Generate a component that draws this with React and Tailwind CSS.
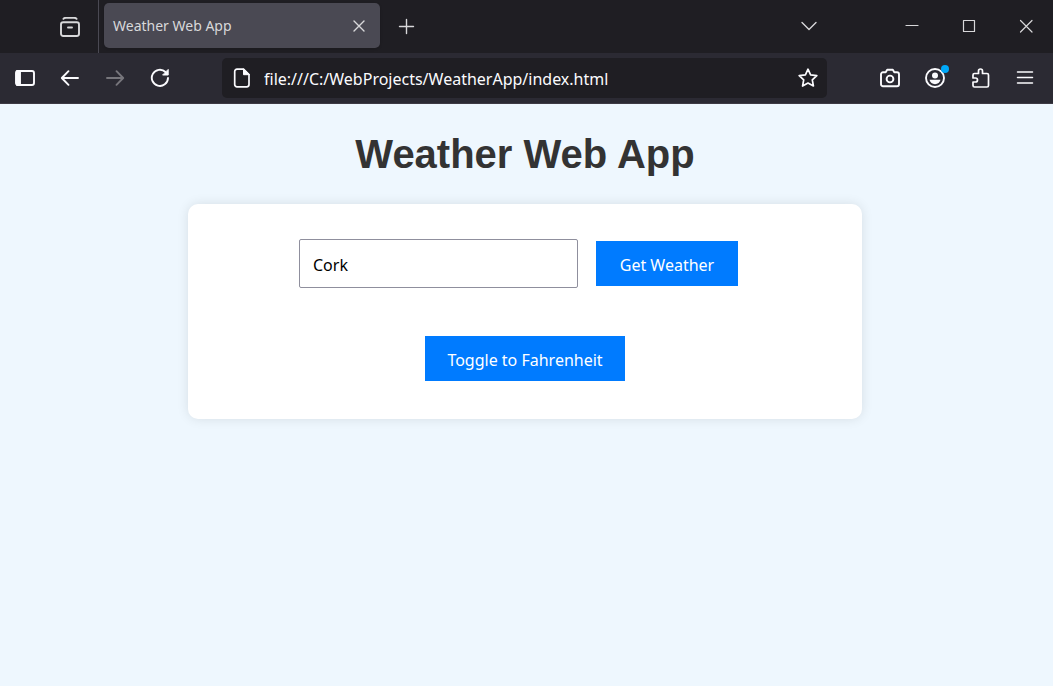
import React, { useState } from 'react';

// Shared frame for the 20x20 browser icons
const Icon = ({ children, className = '' }) => (
    <svg
        width="20"
        height="20"
        viewBox="0 0 20 20"
        fill="none"
        stroke="currentColor"
        strokeWidth="1.9"
        strokeLinecap="round"
        strokeLinejoin="round"
        aria-hidden="true"
        className={`shrink-0 ${className}`}
    >
        {children}
    </svg>
);

const ToolButton = ({ label, children, className = '' }) => (
    <button
        type="button"
        aria-label={label}
        className={`flex h-10 w-[45px] items-center justify-center ${className}`}
    >
        {children}
    </button>
);

const WindowButton = ({ label, children }) => (
    <button type="button" aria-label={label} className="flex h-full w-[54px] items-center justify-center">
        {children}
    </button>
);

const TabStrip = () => (
    <div className="flex h-[53px] items-center bg-[#1f1e23] text-[#d8d8da]">
        <button type="button" aria-label="Firefox View" className="flex h-full w-[99px] items-center justify-end border-r border-[#4a4953] pr-[18px]">
            <Icon>
                <rect x="1" y="5.2" width="18" height="13.8" rx="2.2" />
                <path d="M3.5 1.8C4 .9 4.8.8 6 .8h8c1.200 0 2 .1 2.500 1M8 10.500h4" />
            </Icon>
        </button>

        <div className="mb-0.5 ml-[5px] flex h-[45px] w-[276px] items-center justify-between rounded-[5px] bg-[#4a4953] pr-[11px] pl-[9px] shadow">
            <span className="pt-px text-[14px] leading-5">Weather Web App</span>
            <button type="button" aria-label="Close tab" className="flex size-5 items-center justify-center">
                <Icon>
                    <path d="M5 5l10 10M15 5L5 15" strokeWidth="1.4" />
                </Icon>
            </button>
        </div>

        <ToolButton label="New tab" className="ml-1">
            <Icon>
                <path d="M9.500 2.500v14M2.500 9.500h14" strokeWidth="1.4" />
            </Icon>
        </ToolButton>

        <ToolButton label="List all tabs" className="mr-[54px] ml-auto">
            <Icon>
                <path d="M3 5.500l7 7 7-7" strokeWidth="1.4" />
            </Icon>
        </ToolButton>

        <div className="flex h-full gap-[3px]">
            <WindowButton label="Minimize">
                <Icon>
                    <path d="M4 8.500h12" strokeWidth="1.2" />
                </Icon>
            </WindowButton>
            <WindowButton label="Maximize">
                <Icon>
                    <rect x="4.500" y="3.500" width="11" height="11" strokeWidth="1.2" />
                </Icon>
            </WindowButton>
            <WindowButton label="Close">
                <Icon>
                    <path d="M4.500 3.500l11.500 11.500M16 3.500L4.500 15" strokeWidth="1.2" />
                </Icon>
            </WindowButton>
        </div>
    </div>
);

const Toolbar = () => (
    <div className="flex h-[51px] items-center border-b border-[#3d3a44] bg-[#2b2a33] pr-1.5 pl-0.5 text-[#fbfbfe]">
        <ToolButton label="Show sidebar">
            <Icon>
                <rect x="1" y="3" width="18" height="14" rx="2" />
                <path d="M2 3h3v14H2z" fill="currentColor" />
            </Icon>
        </ToolButton>
        <ToolButton label="Back">
            <Icon>
                <path d="M18 10H2M8.500 3.200L1.800 10l6.700 6.800" />
            </Icon>
        </ToolButton>
        <ToolButton label="Forward" className="text-[#77767c]">
            <Icon>
                <path d="M2 10h16M11.500 3.200l6.700 6.800-6.700 6.800" />
            </Icon>
        </ToolButton>
        <ToolButton label="Reload">
            <Icon>
                <path d="M15.500 4A8.100 8.100 0 1 0 18 10" />
                <path d="M18.200 1.800v5.200H13z" fill="currentColor" strokeWidth="1" />
            </Icon>
        </ToolButton>

        <div className="mr-10 ml-10 flex h-10 flex-1 items-center rounded-[5px] bg-[#1f1e23] pr-[9px] pl-2.5">
            <Icon>
                <path d="M5 1.200h6.500l5.500 5.500v9.800a2.300 2.300 0 0 1-2.300 2.300H5a2.300 2.300 0 0 1-2.300-2.300v-13A2.300 2.300 0 0 1 5 1.200z" strokeWidth="1.7" />
                <path d="M11.500 1.200v5.500H17z" fill="currentColor" strokeWidth="1" />
            </Icon>
            <input
                type="text"
                aria-label="Address"
                defaultValue="file:///C:/WebProjects/WeatherApp/index.html"
                className="ml-3 min-w-0 flex-1 bg-transparent pt-0.5 text-base outline-none"
            />
            <button type="button" aria-label="Bookmark this page">
                <Icon>
                    <path d="M10 1.200l2.600 5.600 6.200.8-4.500 4.200 1.100 6.200L10 15.100 4.600 18l1.100-6.200L1.200 7.600l6.200-.8z" strokeWidth="1.7" />
                </Icon>
            </button>
        </div>

        <ToolButton label="Take screenshot">
            <Icon>
                <path d="M3 4.300h2.700l1.500-2.500h5.600l1.500 2.500H17a2 2 0 0 1 2 2v9.900a2 2 0 0 1-2 2H3a2 2 0 0 1-2-2V6.300a2 2 0 0 1 2-2z" />
                <circle cx="10" cy="11" r="3.400" />
            </Icon>
        </ToolButton>
        <ToolButton label="Account">
            <span className="relative">
                <Icon>
                    <circle cx="10" cy="10" r="9" />
                    <circle cx="10" cy="7.500" r="3" fill="currentColor" stroke="none" />
                    <path d="M4.500 11.800h11c-.6 2.700-2.800 4.400-5.500 4.400s-4.900-1.700-5.500-4.400z" fill="currentColor" stroke="none" />
                </Icon>
                <span className="absolute -top-[3px] -right-1 size-2 rounded-full bg-[#00a8f8]" />
            </span>
        </ToolButton>
        <ToolButton label="Extensions">
            <Icon>
                <path d="M4.500 5.500h4V3a2 2 0 0 1 4 0v2.500H17a1.500 1.500 0 0 1 1.500 1.500v10.500A1.500 1.500 0 0 1 17 19H4.500A1.500 1.500 0 0 1 3 17.500V14h2.500a2 2 0 0 0 0-4H3V7a1.500 1.500 0 0 1 1.500-1.500z" strokeWidth="1.7" />
            </Icon>
        </ToolButton>
        <ToolButton label="Open application menu">
            <Icon>
                <path d="M2.500 4h15M2.500 9.500h15M2.500 15h15" strokeWidth="1.5" />
            </Icon>
        </ToolButton>
    </div>
);

const WeatherCard = () => {
    const [city, setCity] = useState('Cork');
    const [fahrenheit, setFahrenheit] = useState(false);

    return (
        <div className="w-full max-w-[674px] rounded-[10px] bg-white pt-[35px] pb-[38px] shadow-[0_0_12px_rgba(0,0,0,0.1)]">
            <form className="flex items-center justify-center" onSubmit={(e) => e.preventDefault()}>
                <input
                    type="text"
                    aria-label="City"
                    value={city}
                    onChange={(e) => setCity(e.target.value)}
                    className="h-[49px] w-[279px] rounded-xs border border-[#8f8f9d] px-[13px] pt-0.5 text-base text-black outline-none"
                />
                <button type="submit" className="mr-[13px] ml-[18px] h-[45px] w-[142px] bg-[#007bff] pt-0.5 text-base text-white">
                    Get Weather
                </button>
            </form>

            <div className="mt-12 flex justify-center">
                <button
                    type="button"
                    onClick={() => setFahrenheit(!fahrenheit)}
                    className="h-[45px] w-[200px] bg-[#007bff] pt-0.5 text-base text-white"
                >
                    {fahrenheit ? 'Toggle to Celsius' : 'Toggle to Fahrenheit'}
                </button>
            </div>
        </div>
    );
};

const App = () => {
    return (
        <div className="flex min-h-screen flex-col bg-[#eef7fe] font-['Noto_Sans',sans-serif]">
            <header>
                <TabStrip />
                <Toolbar />
            </header>

            <main className="flex flex-1 flex-col items-center pt-[26px] pr-[3px]">
                <h1 className="mb-[26px] font-['Liberation_Sans',sans-serif] text-[40px] leading-12 font-bold text-[#333333]">
                    Weather Web App
                </h1>
                <WeatherCard />
            </main>
        </div>
    );
};

export default App;
